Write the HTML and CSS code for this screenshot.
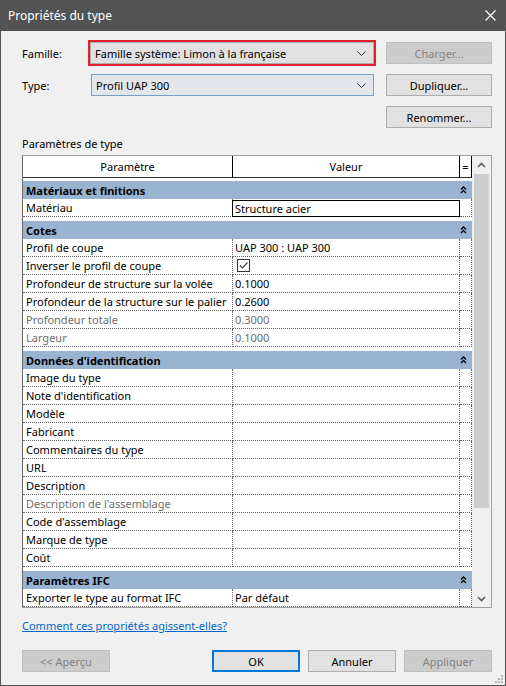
FILE: index.html
```html
<!DOCTYPE html>
<html lang="fr">
<head>
    <meta charset="UTF-8">
    <title>Propriétés du type</title>
    <link rel="stylesheet" href="styles.css">
</head>
<body>
<div class="window">
    <div class="titlebar">
        <span class="title">Propriétés du type</span>
        <svg class="close" width="11" height="11" viewBox="0 0 11 11"><path d="M0.5 0.5L10.5 10.5M10.5 0.5L0.5 10.5" stroke="#fff" stroke-width="1.2"/></svg>
    </div>
    <div class="content">
        <div class="top">
            <label class="lbl">Famille:</label>
            <div class="combo family"><span>Famille système: Limon à la française</span><svg width="9" height="5" viewBox="0 0 9 5"><path d="M0.5 0.5L4.5 4.5L8.5 0.5" fill="none" stroke="#333"/></svg></div>
            <button class="btn" disabled>Charger...</button>
            <label class="lbl">Type:</label>
            <div class="combo type"><span>Profil UAP 300</span><svg width="9" height="5" viewBox="0 0 9 5"><path d="M0.5 0.5L4.5 4.5L8.5 0.5" fill="none" stroke="#333"/></svg></div>
            <button class="btn">Dupliquer...</button>
            <span></span>
            <span></span>
            <button class="btn">Renommer...</button>
        </div>

        <div class="section-label">Paramètres de type</div>

        <div class="table">
            <div class="grid">
                <div class="row head">
                    <div class="c1">Paramètre</div>
                    <div class="c2">Valeur</div>
                    <div class="c3">=</div>
                </div>

                <div class="group first"><span>Matériaux et finitions</span><svg width="7" height="8" viewBox="0 0 7 8"><path d="M1 3.5L3.5 1L6 3.5M1 7L3.5 4.5L6 7" fill="none" stroke="#000" stroke-width="1.3"/></svg></div>
                <div class="row">
                    <div class="c1">Matériau</div>
                    <div class="c2 edit">Structure acier</div>
                    <div class="c3"></div>
                </div>

                <div class="group"><span>Cotes</span><svg width="7" height="8" viewBox="0 0 7 8"><path d="M1 3.5L3.5 1L6 3.5M1 7L3.5 4.5L6 7" fill="none" stroke="#000" stroke-width="1.3"/></svg></div>
                <div class="row"><div class="c1">Profil de coupe</div><div class="c2">UAP 300 : UAP 300</div><div class="c3"></div></div>
                <div class="row"><div class="c1">Inverser le profil de coupe</div><div class="c2"><span class="check"><svg width="11" height="11" viewBox="0 0 11 11"><path d="M2 5.5L4.5 8L9.5 2.5" fill="none" stroke="#444" stroke-width="1.2"/></svg></span></div><div class="c3"></div></div>
                <div class="row"><div class="c1">Profondeur de structure sur la volée</div><div class="c2">0.1000</div><div class="c3"></div></div>
                <div class="row"><div class="c1">Profondeur de la structure sur le palier</div><div class="c2">0.2600</div><div class="c3"></div></div>
                <div class="row dim"><div class="c1">Profondeur totale</div><div class="c2">0.3000</div><div class="c3"></div></div>
                <div class="row dim"><div class="c1">Largeur</div><div class="c2">0.1000</div><div class="c3"></div></div>

                <div class="group"><span>Données d'identification</span><svg width="7" height="8" viewBox="0 0 7 8"><path d="M1 3.5L3.5 1L6 3.5M1 7L3.5 4.5L6 7" fill="none" stroke="#000" stroke-width="1.3"/></svg></div>
                <div class="row"><div class="c1">Image du type</div><div class="c2"></div><div class="c3"></div></div>
                <div class="row"><div class="c1">Note d'identification</div><div class="c2"></div><div class="c3"></div></div>
                <div class="row"><div class="c1">Modèle</div><div class="c2"></div><div class="c3"></div></div>
                <div class="row"><div class="c1">Fabricant</div><div class="c2"></div><div class="c3"></div></div>
                <div class="row"><div class="c1">Commentaires du type</div><div class="c2"></div><div class="c3"></div></div>
                <div class="row"><div class="c1">URL</div><div class="c2"></div><div class="c3"></div></div>
                <div class="row"><div class="c1">Description</div><div class="c2"></div><div class="c3"></div></div>
                <div class="row dim"><div class="c1">Description de l'assemblage</div><div class="c2"></div><div class="c3"></div></div>
                <div class="row"><div class="c1">Code d'assemblage</div><div class="c2"></div><div class="c3"></div></div>
                <div class="row"><div class="c1">Marque de type</div><div class="c2"></div><div class="c3"></div></div>
                <div class="row"><div class="c1">Coût</div><div class="c2"></div><div class="c3"></div></div>

                <div class="group"><span>Paramètres IFC</span><svg width="7" height="8" viewBox="0 0 7 8"><path d="M1 3.5L3.5 1L6 3.5M1 7L3.5 4.5L6 7" fill="none" stroke="#000" stroke-width="1.3"/></svg></div>
                <div class="row"><div class="c1">Exporter le type au format IFC</div><div class="c2">Par défaut</div><div class="c3"></div></div>
            </div>
            <div class="scrollbar">
                <div class="arrow"><svg width="9" height="6" viewBox="0 0 9 6"><path d="M1 5L4.5 1.5L8 5" fill="none" stroke="#606060" stroke-width="1.6"/></svg></div>
                <div class="thumb"></div>
                <div class="arrow down"><svg width="9" height="6" viewBox="0 0 9 6"><path d="M1 1L4.5 4.5L8 1" fill="none" stroke="#606060" stroke-width="1.6"/></svg></div>
            </div>
        </div>

        <a class="help" href="#">Comment ces propriétés agissent-elles?</a>

        <div class="actions">
            <button class="btn" disabled>&lt;&lt; Aperçu</button>
            <button class="btn default">OK</button>
            <button class="btn">Annuler</button>
            <button class="btn" disabled>Appliquer</button>
        </div>
    </div>
    <svg class="grip" width="9" height="9" viewBox="0 0 9 9">
        <rect x="7" y="1" width="2" height="2" fill="#b8b8b8"/>
        <rect x="4" y="4" width="2" height="2" fill="#b8b8b8"/>
        <rect x="7" y="4" width="2" height="2" fill="#b8b8b8"/>
        <rect x="1" y="7" width="2" height="2" fill="#b8b8b8"/>
        <rect x="4" y="7" width="2" height="2" fill="#b8b8b8"/>
        <rect x="7" y="7" width="2" height="2" fill="#b8b8b8"/>
    </svg>
</div>
</body>
</html>
```

FILE: styles.css
```css
body {
    margin: 0;
    background: #f0f0f0;
    font-family: "Noto Sans", sans-serif;
    font-size: 11px;
    color: #000;
}
.window {
    position: relative;
    width: 506px;
    height: 686px;
    box-sizing: border-box;
    border: 1px solid #535353;
    border-top: none;
    background: #f0f0f0;
}
.titlebar {
    height: 31px;
    background: #535353;
    display: flex;
    align-items: center;
    justify-content: space-between;
    padding: 0 10px 0 8px;
    margin: 0 -1px;
}
.title {
    color: #fff;
    font-size: 12px;
}
.content {
    padding: 0 13px 0 21px;
}
.top {
    display: grid;
    grid-template-columns: 69px 295px 106px;
    grid-auto-rows: 22px;
    row-gap: 10px;
    margin-top: 11px;
}
.lbl {
    display: flex;
    align-items: center;
}
.combo {
    width: 283px;
    display: flex;
    align-items: center;
    justify-content: space-between;
    box-sizing: border-box;
    padding: 0 7px 0 4px;
    border: 1px solid #acacac;
    background: #e1e1e1;
}
.combo.family {
    outline: 2px solid #e0222e;
    margin-left: -1px;
    width: 284px;
}
.combo.type {
    border-color: #7a9fc5;
    background: #e3e7eb;
}
.btn {
    font-family: inherit;
    font-size: 11px;
    color: #000;
    background: #e1e1e1;
    border: 1px solid #adadad;
    padding: 0;
    height: 22px;
}
.btn:disabled {
    background: #cccccc;
    border-color: #bfbfbf;
    color: #838383;
}
.btn.default {
    border: 2px solid #0078d7;
}
.section-label {
    margin-top: 8px;
    line-height: 15px;
}
.table {
    margin-top: 4px;
    height: 453px;
    box-sizing: border-box;
    border: 1px solid #a0a0a0;
    border-left-color: #6a6a6a;
    display: flex;
    background: #fff;
}
.grid {
    width: 449px;
    overflow: hidden;
}
.row {
    display: flex;
    height: 18px;
}
.row > div {
    box-sizing: border-box;
    height: 18px;
    border-right: 1px dotted #666;
    border-bottom: 1px dotted #666;
    white-space: nowrap;
    overflow: hidden;
    display: flex;
    align-items: center;
}
.c1 {
    width: 210px;
    padding-left: 3px;
}
.c2 {
    width: 227px;
    padding-left: 2px;
}
.c3 {
    width: 12px;
}
.row.head {
    height: 22px;
}
.row.head > div {
    height: 22px;
    justify-content: center;
    border-right: 1px solid #000;
    border-bottom: 1px solid #333;
    padding: 0;
}
.row > .edit {
    width: 228px;
    height: 17px;
    margin-left: -1px;
    margin-top: 1px;
    border: 1px solid #000;
    padding-left: 2px;
}
.row.dim {
    color: #6d6d6d;
}
.check {
    width: 13px;
    height: 13px;
    box-sizing: border-box;
    border: 1px solid #333;
    margin-left: 2px;
    display: flex;
    align-items: center;
    justify-content: center;
}
.group {
    margin-top: 4px;
    height: 18px;
    background: #99b4d1;
    font-weight: bold;
    display: flex;
    align-items: center;
    justify-content: space-between;
    padding: 0 5px 0 3px;
}
.group.first {
    margin-top: 3px;
}
.scrollbar {
    flex: 1;
    background: #f0f0f0;
    display: flex;
    flex-direction: column;
}
.arrow {
    height: 17px;
    display: flex;
    align-items: center;
    justify-content: center;
}
.thumb {
    margin: 1px 2px 0 2px;
    height: 334px;
    background: #cdcdcd;
}
.arrow.down {
    margin-top: auto;
}
.help {
    display: block;
    margin-top: 10px;
    line-height: 15px;
    color: #0066cc;
    width: max-content;
}
.actions {
    display: flex;
    gap: 8px;
    margin-top: 17px;
}
.actions .btn {
    width: 88px;
}
.actions .default {
    margin-left: auto;
}
.grip {
    position: absolute;
    right: 2px;
    bottom: 2px;
}
```
